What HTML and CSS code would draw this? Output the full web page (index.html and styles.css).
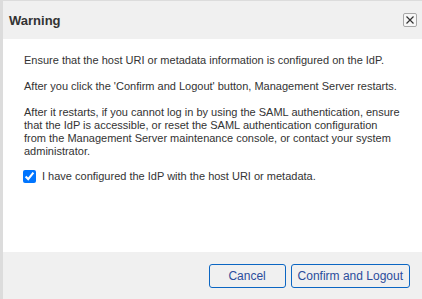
FILE: index.html
```html
<!DOCTYPE html>
<html lang="en">

<head>
    <meta charset="UTF-8">
    <meta name="viewport" content="width=device-width, initial-scale=1.0">
    <title>Warning</title>
    <link rel="stylesheet" href="styles.css">
</head>

<body>
    <div class="dialog">
        <div class="dialog-header">
            <span class="title">Warning</span>
            <button class="close" type="button" aria-label="Close">
                <svg width="8" height="8" viewBox="0 0 8 8">
                    <path d="M0.5 0.5 L7.5 7.5 M7.5 0.5 L0.5 7.5" stroke="#333" stroke-width="1.2" fill="none" />
                </svg>
            </button>
        </div>
        <div class="dialog-body">
            <p>Ensure that the host URI or metadata information is configured on the IdP.</p>
            <p>After you click the 'Confirm and Logout' button, Management Server restarts.</p>
            <p>After it restarts, if you cannot log in by using the SAML authentication, ensure that the IdP is accessible, or reset the SAML authentication configuration from the Management Server maintenance console, or contact your system administrator.</p>
            <label class="check">
                <input type="checkbox" checked>
                <span>I have configured the IdP with the host URI or metadata.</span>
            </label>
        </div>
        <div class="dialog-footer">
            <button class="btn" type="button">Cancel</button>
            <button class="btn" type="button">Confirm and Logout</button>
        </div>
    </div>
</body>

</html>
```

FILE: styles.css
```css
html, body {
    height: 100%;
}
body {
    margin: 0;
    background: #dcdcdc;
    font-family: "Liberation Sans", Arial, sans-serif;
    font-size: 11px;
    color: #333;
}
.dialog {
    margin: 1px 0 0 3px;
    height: calc(100% - 1px);
    display: flex;
    flex-direction: column;
    background: #fff;
}
.dialog-header {
    height: 38px;
    display: flex;
    align-items: center;
    justify-content: space-between;
    padding: 0 5px 0 6px;
    background: #f0f0f0;
}
.title {
    font-size: 13px;
    font-weight: bold;
    color: #333;
}
.close {
    width: 14px;
    height: 14px;
    padding: 0;
    display: flex;
    align-items: center;
    justify-content: center;
    border: 1px solid #a8a8a8;
    border-radius: 2px;
    background: #f7f7f7;
    cursor: pointer;
}
.dialog-body {
    flex: 1;
    padding: 15px 22px 0 21px;
    line-height: 13px;
}
.dialog-body p {
    margin: 0 0 13px;
}
.dialog-body p:nth-of-type(3) {
    margin-bottom: 11px;
}
.check {
    display: flex;
    align-items: center;
    height: 14px;
}
.check input {
    width: 13px;
    height: 13px;
    margin: 0 6px 0 -1px;
}
.dialog-footer {
    height: 47px;
    display: flex;
    justify-content: flex-end;
    align-items: flex-start;
    gap: 5px;
    padding: 12px 12px 0 0;
    box-sizing: border-box;
    background: #f0f0f0;
}
.btn {
    min-width: 77px;
    height: 24px;
    padding: 0 6px;
    border: 1px solid #0b66c3;
    border-radius: 3px;
    background: #f0f0f0;
    color: #2b4d9c;
    font-family: "Liberation Sans", Arial, sans-serif;
    font-size: 12px;
    cursor: pointer;
}
```
